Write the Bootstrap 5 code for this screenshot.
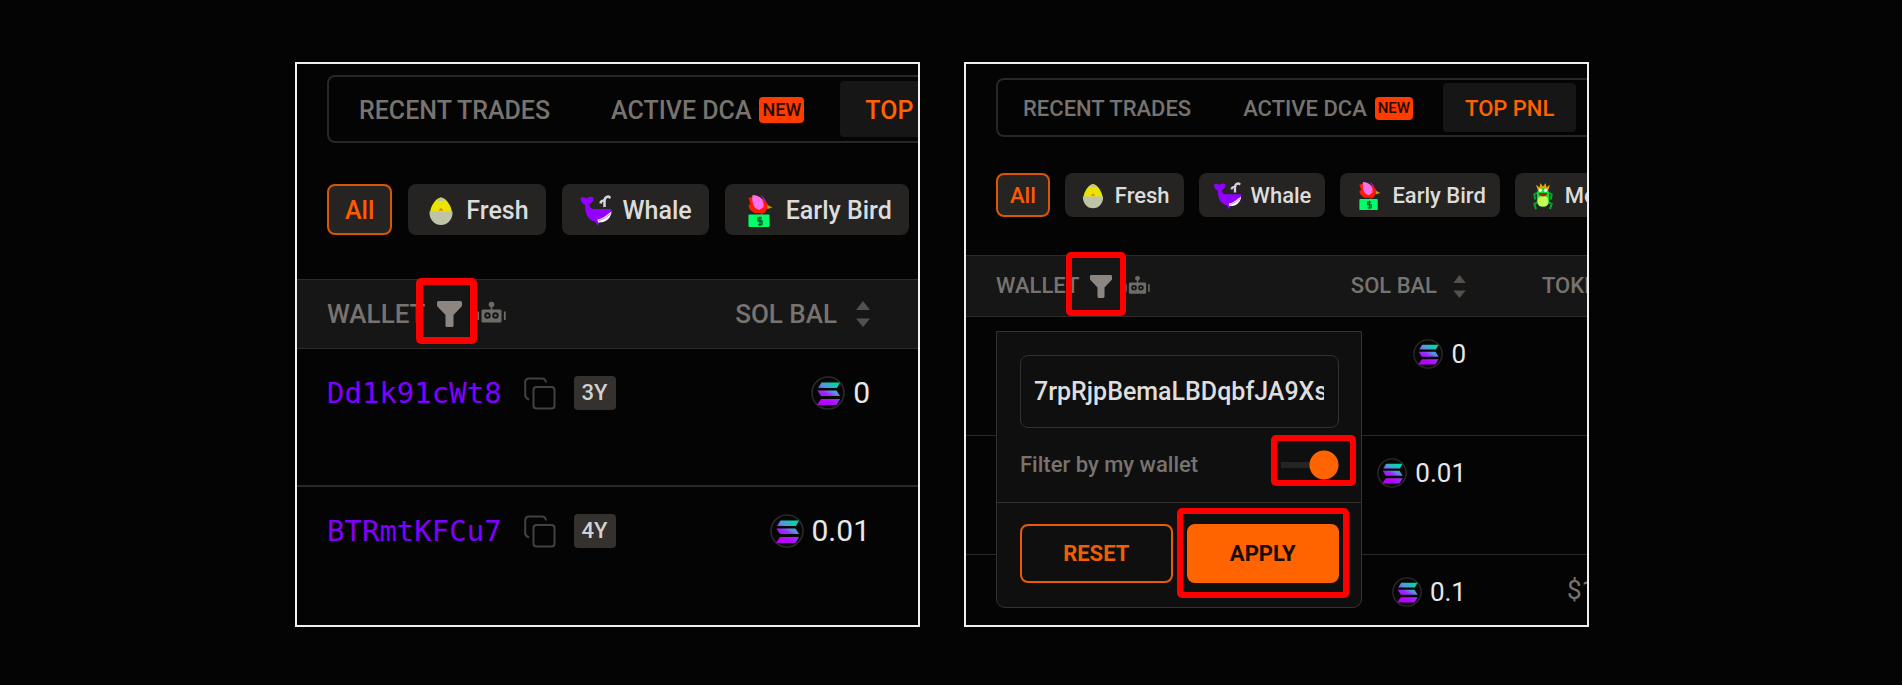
<!DOCTYPE html>
<html lang="en">
<head>
<meta charset="utf-8">
<meta name="viewport" content="width=device-width, initial-scale=1">
<title>Filter top PNL by wallet</title>
<link href="https://cdn.jsdelivr.net/npm/bootstrap@5.3.0/dist/css/bootstrap.min.css" rel="stylesheet">
<style>
body { background: #040404; color: #e8e8e8; font-family: Roboto, "Liberation Sans", sans-serif; }
.steps { max-width: 1312px; padding: 62px 18px 56px 0; display: grid; grid-template-columns: repeat(auto-fit, minmax(480px, 1fr)); gap: 44px; }

/* Each shot shows the same screen at its own zoom level */
.shot { --fs: 25px; --head-fs: 26px; --amount: 30px; --tab-h: 56px; --tab-x: 25px; --tab-gap: 11px; --chip-h: 51px; --chip-x: 17px; --chip-gap: 16px; --ico: 32px; --ico-wide: 35px; --ico-gap: 9px;
  --head-h: 70px; --row-h: 138px; --row-top: 27px; --sol: 34px; --line: 2px; --funnel-gap: 12px; --robot-gap: 15px; --sort-gap: 19px;
  border: 2px solid #f0f0f0; background: #040404; overflow: hidden; padding-top: 11px; min-width: 0; font-size: var(--fs); line-height: 1; }
.shot-zoomed-out { --fs: 22px; --head-fs: 22px; --amount: 26px; --tab-h: 49px; --tab-x: 22px; --tab-gap: 8px; --chip-h: 44px; --chip-x: 14px; --chip-gap: 15px; --ico: 28px; --ico-wide: 30px; --ico-gap: 8px;
  --head-h: 62px; --row-h: 119px; --row-top: 22px; --sol: 30px; --line: 1px; --funnel-gap: 11px; --robot-gap: 13px; --sort-gap: 16px; padding-top: 14px; }

.tabs { margin-left: 30px; border: 2px solid #272727; border-right: 0; border-radius: 8px 0 0 8px; padding: 4px 5px; gap: var(--tab-gap); }
.shot-zoomed-out .tabs { padding: 3px; }
.tab-btn { height: var(--tab-h); padding: 2px var(--tab-x) 0; border: 0; border-radius: 4px; background: none; color: #77736f; font-weight: 500; white-space: nowrap; flex: none; display: flex; align-items: center; gap: 8px; }
.tab-btn.active { background: #161616; color: #ff6200; }
.tag-new { background: #ff3b00; color: #240a00; border-radius: 4px; font-weight: 500; font-size: 18px; line-height: 26px; padding: 0 3px; }
.shot-zoomed-out .tag-new { font-size: 15px; line-height: 23px; padding: 0 3px; }

.chips { margin: 41px 0 44px 30px; gap: var(--chip-gap); }
.shot-zoomed-out .chips { margin: 36px 0 38px 30px; }
.chip { height: var(--chip-h); padding: 2px var(--chip-x) 0; border: 0; border-radius: 8px; background: #252422; color: #dcdcdc; font-weight: 500; flex: none; display: flex; align-items: center; gap: var(--ico-gap); white-space: nowrap; }
.chip svg { width: var(--ico); height: var(--ico); }
.chip .ico-wide { width: var(--ico-wide); }
.chip.active { border: 2px solid #d95703; color: #ff5a00; padding: 2px 16px 0; }
.shot-zoomed-out .chip.active { padding: 2px 12px 0; }

.wallets { width: 100%; border-collapse: separate; border-spacing: 0; table-layout: fixed; }
.wallets th { height: var(--head-h); padding: 0; background: #161616; color: #77736f; font-weight: 500; border: solid #2e2b28; border-width: 1px 0; vertical-align: middle; white-space: nowrap; position: relative; }
.wallets thead { font-size: var(--head-fs); }
.wallets td { height: var(--row-h); padding: var(--row-top) 0 0; vertical-align: top; border-bottom: var(--line) solid #2b2826; }
.wallets tr:last-child td { border-bottom: 0; }
.wallets .c-wallet { padding-left: 30px; }
.wallets .c-sol { padding-right: 48px; width: 280px; }
.wallets .c-tok { color: #77736f; overflow: hidden; }
.shot-zoomed-out .wallets .c-sol { padding-right: 0; width: 200px; }
.shot-zoomed-out .wallets .c-tok { width: 121px; padding-left: 76px; }
.shot-zoomed-out .wallets td.c-tok { padding-left: 101px; font-size: var(--amount); }
.shot-zoomed-out .wallets tbody tr:last-child td { height: 70px; }
.row-line { height: 34px; }
.shot-zoomed-out .row-line { height: 30px; }
.amount { font-size: var(--amount); gap: 8px; }
.amount svg { width: var(--sol); height: var(--sol); }
.addr { font-family: "DejaVu Sans Mono", "Liberation Mono", monospace; font-size: 29px; color: #8000ff; text-decoration: none; }
.icon-btn { border: 0; background: none; padding: 0; color: inherit; display: block; position: relative; line-height: 0; }
.copy-btn { margin: 0 18px 0 22px; }
.funnel-btn { margin: 0 var(--robot-gap) 0 var(--funnel-gap); }
.sort-head { gap: var(--sort-gap); }
.funnel { width: 25px; height: 26px; }
.robot { width: 29px; height: 26px; }
.sorter { width: 14px; height: 26px; }
.shot-zoomed-out .funnel { width: 22px; height: 23px; }
.shot-zoomed-out .robot { width: 25px; height: 23px; }
.shot-zoomed-out .sorter { width: 13px; height: 23px; }
.age { background: #35312e; color: #d2d2d2; border-radius: 4px; font-size: 22px; font-weight: 500; line-height: 34px; padding: 0 8px; }

/* Red highlight drawn over the control it points at */
.marker { position: absolute; border: 6px solid #ff0000; border-radius: 5px; pointer-events: none; z-index: 3; }
.marker-funnel { inset: -23px -15px -17px -21px; border-width: 7px; }
.shot-zoomed-out .marker-funnel { inset: -23px -14px -18px -24px; border-width: 6px; }
.marker-toggle { inset: -15px -17px -6px -38px; }
.marker-apply { inset: -16px -10px -15px; }

.filter-menu { position: absolute; left: 30px; top: 75px; width: 366px; z-index: 2; background: #0f0f0f; border: 1px solid #35312e; border-radius: 0 0 9px 9px; text-align: left; font-size: var(--fs); }
.filter-menu .wallet-input { width: 100%; height: 73px; border: 1px solid #33302d; border-radius: 8px; background: transparent; color: #dedede; font-size: 25px; font-weight: 500; padding: 0 14px 0 13px; display: block; outline: 0; }
.menu-top { padding: 23px 22px 0 23px; }
.menu-actions { border-top: 1px solid #35312e; padding: 21px 22px 24px 23px; gap: 14px; }
.menu-actions > * { flex: 1 1 0; position: relative; }
.act { width: 100%; height: 59px; border-radius: 8px; border: 2px solid #e85d04; background: transparent; color: #ee6002; font-weight: 700; padding: 0; display: block; }
.act-apply { background: #ff6400; border-color: #ff6400; color: #150b04; }
.toggle-line { height: 74px; }
.toggle-line .switch-wrap { position: relative; width: 30px; height: 30px; display: flex; justify-content: flex-end; }
.mini-switch { appearance: none; flex: none; width: 60px; height: 30px; margin: 0; background: radial-gradient(circle at 45px 15px, #ff6400 14px, transparent 15px), linear-gradient(#252422, #252422) 2px 12px / 43px 6px no-repeat; }
</style>
</head>
<body>
<svg width="0" height="0" class="position-absolute" aria-hidden="true">
  <defs>
    <linearGradient id="solGrad" gradientUnits="userSpaceOnUse" x1="11" y1="29" x2="25" y2="5">
      <stop offset="0.15" stop-color="#b800ff"/><stop offset="0.45" stop-color="#9a2cff"/><stop offset="0.6" stop-color="#5d8fe0"/><stop offset="0.9" stop-color="#00d8a8"/>
    </linearGradient>
    <symbol id="sol" viewBox="0 0 34 34">
      <circle cx="17" cy="17" r="16" fill="#060606" stroke="#2c2a29" stroke-width="1.6"/>
      <g fill="url(#solGrad)"><path d="M10.500 6.500H29l-3 5.500H7z"/><path d="M6.500 14.500h19L29 20H10z"/><path d="M10 23H29l-3.500 6H6z"/></g>
    </symbol>
    <symbol id="egg" viewBox="0 0 32 32">
      <path d="M16 2.500c5 0 11 9 11 16H5c0-7 6-16 11-16z" fill="#e9e400"/>
      <path d="M12 5q4-5 8 0l-1.500 1h-5z" fill="#bfc3a5"/>
      <path d="M4.500 16.500h23C28 24 23 30 16 30S4 24 4.500 16.500z" fill="#bfc3a8"/>
      <path d="M13.500 15.500L16 13l2.500 2.500z" fill="#ff5a00"/>
    </symbol>
    <symbol id="whale" viewBox="0 0 32 32">
      <path d="M0 3c2-1.500 4-1 6 .5C8 1.500 11 1 13 2.500c.5 3-1 5.500-4 6.500 0 3 2 5 5 5h17c.5 6-3 12-10 13l-2 0-2 4-2-4C8 25 4.500 20 4.500 10 2 9 0 6 0 3z" fill="#9200ff"/>
      <path d="M17 24.500c5-.5 9-4.500 14-8-.5 7-6 11.500-13.500 11z" fill="#fff"/>
      <path d="M18 26q8-3 12-7" stroke="#b982ff" stroke-width="1" fill="none"/>
      <path d="M24 12V6m-4 2.500Q20.500 5 24 6q0-4 4-4.500l2 1.500" stroke="#d5d0de" stroke-width="2.600" fill="none"/>
    </symbol>
    <symbol id="bird" viewBox="0 0 32 32">
      <path d="M5 3l7-2c6 1 13 6 13 11l-4 6H11c-4-2-6-5-6-8l2-1z" fill="#ff1a00"/>
      <path d="M9 0c7 0 12 5 11 12l-4 3c-5-1-8-5-7-15z" fill="#ff70ee"/>
      <path d="M16 0c4 1 7 5 6 9-1-4-3-7-6-9z" fill="#9b27d8"/>
      <path d="M24 10l5 2.500-5 1.500z" fill="#b8a000"/>
      <path d="M18 18v3" stroke="#7b5137" stroke-width="1.500"/>
      <rect x="5" y="19.500" width="21" height="12.500" rx="1" fill="#00ff67"/>
      <path d="M18.500 23h-4v3h4v3.500h-4M16.500 21.500v9.500" stroke="#0a5c2b" stroke-width="1.400" fill="none"/>
    </symbol>
    <symbol id="frog" viewBox="0 0 32 32">
      <path d="M10 9L8 3l4 3 1-5 3 4 3-4 1 5 4-3-2 6z" fill="#e6a100"/>
      <path d="M10 12l-4 2 1 6m15-8l4 2-1 6M10 23l-4 2 2 6m14-8l4 2-2 6" stroke="#00a82a" stroke-width="2.200" fill="none"/>
      <rect x="9" y="7" width="14" height="21" rx="6" fill="#14dc2f"/>
      <rect x="10" y="16" width="12" height="12" rx="5" fill="#c5ff55"/>
      <circle cx="13" cy="9.500" r="2" fill="#e7ffe0"/><circle cx="19" cy="9.500" r="2" fill="#e7ffe0"/>
      <path d="M11 12.500h10q-1 4-5 4t-5-4z" fill="#a82a00"/>
    </symbol>
    <symbol id="funnel" viewBox="0 0 25 26">
      <path d="M1.500 0h22q1.500 0 1.500 1.500v3.500L16.500 14v10.500q0 1.500-1.500 1.500h-5q-1.500 0-1.500-1.500V14L0 5V1.500Q0 0 1.500 0z" fill="#8b8681"/>
    </symbol>
    <symbol id="robot" viewBox="0 0 29 26">
      <circle cx="14.500" cy="3.500" r="2.800" fill="#6f6b67"/><path d="M14.500 4v6" stroke="#6f6b67" stroke-width="1.600"/>
      <path d="M6 8.500h17q1.500 0 1.500 1.500v10q0 1.500-1.500 1.500H6q-1.500 0-1.500-1.500V10q0-1.500 1.500-1.500z" fill="#6f6b67"/>
      <circle cx="10.500" cy="14.500" r="3.200" fill="#161616"/><circle cx="18.500" cy="14.500" r="3.200" fill="#161616"/>
      <circle cx="10.500" cy="14.500" r="1.200" fill="#6f6b67"/><circle cx="18.500" cy="14.500" r="1.200" fill="#6f6b67"/>
      <path d="M1.200 10.500v8.500M27.800 10.500v8.500" stroke="#6f6b67" stroke-width="1.800"/>
    </symbol>
    <symbol id="sorter" viewBox="0 0 14 26">
      <path d="M7 0l7 9H0zM7 26l7-8.500H0z" fill="#55504b"/>
    </symbol>
    <symbol id="copy" viewBox="0 0 32 33">
      <path d="M5 22.500Q1.200 21 1.200 18V5.500q0-4 4-4H18q3.500 0 4 4" fill="none" stroke="#45413e" stroke-width="2"/>
      <rect x="9.500" y="10" width="21" height="21.500" rx="3" fill="none" stroke="#45413e" stroke-width="2"/>
    </symbol>
  </defs>
</svg>

<main class="steps container-fluid">
  <section class="shot" aria-label="Open the wallet filter">
    <nav class="tabs d-flex">
      <button type="button" class="tab-btn">RECENT TRADES</button>
      <button type="button" class="tab-btn">ACTIVE DCA <span class="tag-new">NEW</span></button>
      <button type="button" class="tab-btn active">TOP PNL</button>
    </nav>
    <div class="chips d-flex">
      <button type="button" class="chip active">All</button>
      <button type="button" class="chip"><svg><use href="#egg"/></svg>Fresh</button>
      <button type="button" class="chip"><svg class="ico-wide"><use href="#whale"/></svg>Whale</button>
      <button type="button" class="chip"><svg class="ico-wide"><use href="#bird"/></svg>Early Bird</button>
    </div>
    <table class="wallets">
      <thead><tr>
        <th class="c-wallet"><div class="d-flex align-items-center">WALLET
          <button type="button" class="icon-btn funnel-btn" aria-label="Filter"><svg class="funnel"><use href="#funnel"/></svg><span class="marker marker-funnel"></span></button>
          <svg class="robot"><use href="#robot"/></svg></div></th>
        <th class="c-sol"><div class="sort-head d-flex align-items-center justify-content-end">SOL BAL <svg class="sorter"><use href="#sorter"/></svg></div></th>
      </tr></thead>
      <tbody>
        <tr>
          <td class="c-wallet"><div class="row-line d-flex align-items-center"><a href="#" class="addr">Dd1k91cWt8</a>
            <button type="button" class="icon-btn copy-btn" aria-label="Copy"><svg width="32" height="33"><use href="#copy"/></svg></button><span class="age">3Y</span></div></td>
          <td class="c-sol"><div class="row-line amount d-flex align-items-center justify-content-end"><svg><use href="#sol"/></svg>0</div></td>
        </tr>
        <tr>
          <td class="c-wallet"><div class="row-line d-flex align-items-center"><a href="#" class="addr">BTRmtKFCu7</a>
            <button type="button" class="icon-btn copy-btn" aria-label="Copy"><svg width="32" height="33"><use href="#copy"/></svg></button><span class="age">4Y</span></div></td>
          <td class="c-sol"><div class="row-line amount d-flex align-items-center justify-content-end"><svg><use href="#sol"/></svg>0.01</div></td>
        </tr>
      </tbody>
    </table>
  </section>

  <section class="shot shot-zoomed-out" aria-label="Apply the wallet filter">
    <nav class="tabs d-flex">
      <button type="button" class="tab-btn">RECENT TRADES</button>
      <button type="button" class="tab-btn">ACTIVE DCA <span class="tag-new">NEW</span></button>
      <button type="button" class="tab-btn active">TOP PNL</button>
    </nav>
    <div class="chips d-flex">
      <button type="button" class="chip active">All</button>
      <button type="button" class="chip"><svg><use href="#egg"/></svg>Fresh</button>
      <button type="button" class="chip"><svg class="ico-wide"><use href="#whale"/></svg>Whale</button>
      <button type="button" class="chip"><svg class="ico-wide"><use href="#bird"/></svg>Early Bird</button>
      <button type="button" class="chip"><svg><use href="#frog"/></svg>Meme</button>
    </div>
    <table class="wallets">
      <thead><tr>
        <th class="c-wallet"><div class="d-flex align-items-center">WALLET
          <button type="button" class="icon-btn funnel-btn" aria-label="Filter"><svg class="funnel"><use href="#funnel"/></svg><span class="marker marker-funnel"></span></button>
          <svg class="robot"><use href="#robot"/></svg></div>
          <form class="filter-menu">
            <div class="menu-top">
              <input type="text" class="wallet-input" aria-label="Wallet address" value="7rpRjpBemaLBDqbfJA9Xs">
              <div class="toggle-line d-flex align-items-center justify-content-between">
                <label for="myWallet">Filter by my wallet</label>
                <span class="switch-wrap"><input type="checkbox" role="switch" id="myWallet" class="mini-switch" checked><span class="marker marker-toggle"></span></span>
              </div>
            </div>
            <div class="menu-actions d-flex">
              <div><button type="reset" class="act">RESET</button></div>
              <div><button type="button" class="act act-apply">APPLY</button><span class="marker marker-apply"></span></div>
            </div>
          </form></th>
        <th class="c-sol"><div class="sort-head d-flex align-items-center justify-content-end">SOL BAL <svg class="sorter"><use href="#sorter"/></svg></div></th>
        <th class="c-tok">TOKEN</th>
      </tr></thead>
      <tbody>
        <tr><td></td><td class="c-sol"><div class="row-line amount d-flex align-items-center justify-content-end"><svg><use href="#sol"/></svg>0</div></td><td></td></tr>
        <tr><td></td><td class="c-sol"><div class="row-line amount d-flex align-items-center justify-content-end"><svg><use href="#sol"/></svg>0.01</div></td><td></td></tr>
        <tr><td></td><td class="c-sol"><div class="row-line amount d-flex align-items-center justify-content-end"><svg><use href="#sol"/></svg>0.1</div></td><td class="c-tok">$1</td></tr>
      </tbody>
    </table>
  </section>
</main>
<script src="https://cdn.jsdelivr.net/npm/bootstrap@5.3.0/dist/js/bootstrap.bundle.min.js"></script>
</body>
</html>
